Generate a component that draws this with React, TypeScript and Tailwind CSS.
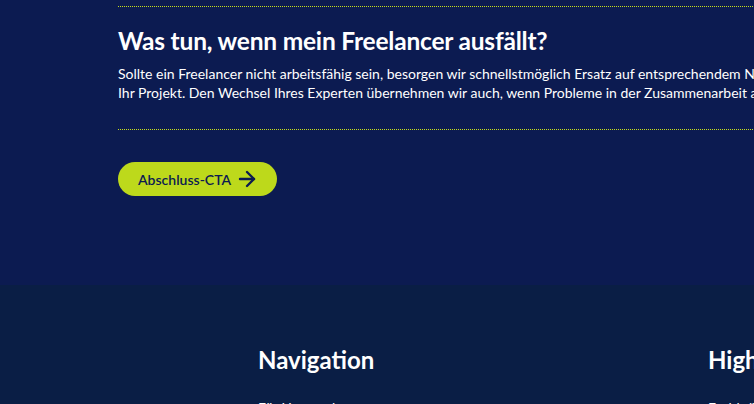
import { ArrowRight } from "lucide-react";

const faq = {
	question: "Was tun, wenn mein Freelancer ausfällt?",
	answer: [
		"Sollte ein Freelancer nicht arbeitsfähig sein, besorgen wir schnellstmöglich Ersatz auf entsprechendem Niveau für",
		"Ihr Projekt. Den Wechsel Ihres Experten übernehmen wir auch, wenn Probleme in der Zusammenarbeit auftreten.",
	],
};

const footerColumns = [
	{ title: "Navigation", links: ["Für Unternehmen", "Für Freelancer"] },
	{ title: "Highlights", links: ["Fachkräfte", "Projekte"] },
];

// 1px dots, 1px gaps, in the accent green
function DottedRule() {
	return (
		<div className="h-px w-full bg-[length:2px_1px] bg-[linear-gradient(to_right,#c8e01c_50%,transparent_50%)] bg-repeat-x" />
	);
}

export default function App() {
	return (
		<div className="w-full overflow-hidden font-['Lato','Open_Sans',sans-serif] text-white">
			<section className="bg-[#0c1b51] pt-[6px] pb-[89px]">
				<div className="ml-[118px] w-[900px]">
					<DottedRule />
					<div className="pt-[19px] pb-[27px]">
						<h3 className="font-bold text-[24.5px] leading-[30px] tracking-[-0.2px]">
							{faq.question}
						</h3>
						<p className="mt-[8px] whitespace-nowrap text-[14px] leading-[19px]">
							{faq.answer[0]}
							<br />
							{faq.answer[1]}
						</p>
					</div>
					<DottedRule />
					<button
						className="mt-[32px] inline-flex h-[34px] items-center gap-[4px] rounded-full bg-[#bdd91b] pr-[18px] pl-[20px] font-semibold text-[#0c1b51] text-[14px]"
						type="button"
					>
						Abschluss-CTA
						<ArrowRight className="size-[24px]" strokeWidth={2.4} />
					</button>
				</div>
			</section>

			<footer className="bg-[#0a1e45] pt-[60px]">
				<div className="ml-[258px] flex gap-[240px]">
					{footerColumns.map((column) => (
						<div className="w-[210px] shrink-0" key={column.title}>
							<h4 className="font-bold text-[24px] leading-[30px]">
								{column.title}
							</h4>
							<ul className="mt-[22px] flex flex-col gap-3 text-[14px]">
								{column.links.map((link) => (
									<li key={link}>{link}</li>
								))}
							</ul>
						</div>
					))}
				</div>
			</footer>
		</div>
	);
}
